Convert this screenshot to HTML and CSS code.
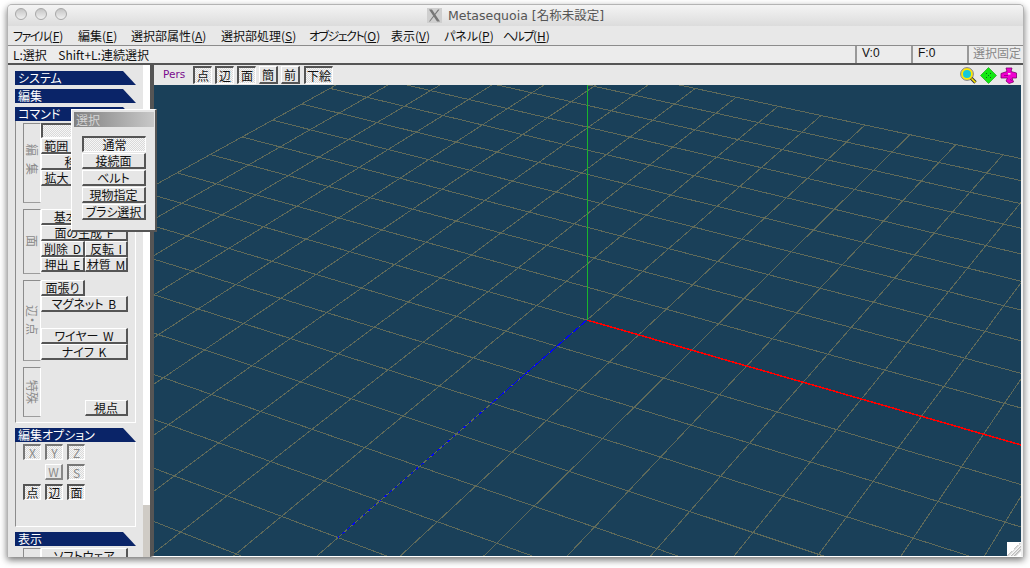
FILE: index.html
```html
<!DOCTYPE html>
<html lang="ja">
<head>
    <meta charset="UTF-8">
    <title>Metasequoia</title>
    <link rel="stylesheet" href="styles.css">
</head>
<body>
    <div class="window">
        <div class="titlebar">
            <div class="lights"><span></span><span></span><span></span></div>
            <div class="title">
                <svg class="x-icon" width="15" height="15" viewBox="0 0 15 15"><rect width="15" height="15" fill="#cfcfcf"/><path d="M2 1.5 H5 L13 13.5 H10 Z M12.5 1.5 L3 13.5 H2 L11 1.5 Z" fill="#777"/></svg>
                <span>Metasequoia [名称未設定]</span>
            </div>
        </div>
        <div class="menubar">
            <span><span class="kana">ファイル</span>(<u>F</u>)</span>
            <span>編集(<u>E</u>)</span>
            <span>選択部属性(<u>A</u>)</span>
            <span>選択部処理(<u>S</u>)</span>
            <span><span class="kana">オブジェクト</span>(<u>O</u>)</span>
            <span>表示(<u>V</u>)</span>
            <span>パネル(<u>P</u>)</span>
            <span><span class="kana">ヘルプ</span>(<u>H</u>)</span>
        </div>
        <div class="statusbar">
            <div class="hint">L:選択&nbsp; Shift+L:連続選択</div>
            <div class="cell">V:0</div>
            <div class="cell">F:0</div>
            <div class="cell cell-lock">選択固定</div>
        </div>
        <div class="workarea">
            <div class="sidebar">
                <div class="panel-title">システム</div>
                <div class="panel-title">編集</div>
                <div class="panel-title">コマンド</div>
                <div class="cmd-box">
                    <div class="group group-edit">
                        <div class="group-label label-spaced">編集</div>
                        <div class="rows">
                            <div class="btn pressed wide short">選択</div>
                            <div class="btn half">範囲 R</div><div class="btn half">投縄</div>
                            <div class="btn wide">移動 W</div>
                            <div class="btn half">拡大 T</div><div class="btn half">回転</div>
                        </div>
                    </div>
                    <div class="group group-face">
                        <div class="group-label">面</div>
                        <div class="rows">
                            <div class="btn wide">基本図形 P</div>
                            <div class="btn wide">面の生成 F</div>
                            <div class="btn half">削除 D</div><div class="btn half">反転 I</div>
                            <div class="btn half short">押出 E</div><div class="btn half short">材質 M</div>
                        </div>
                    </div>
                    <div class="group group-vertex">
                        <div class="group-label">辺・点</div>
                        <div class="rows">
                            <div class="btn half">面張り</div><div class="blank"></div>
                            <div class="btn wide">マグネット B</div>
                            <div class="blank wide"></div>
                            <div class="btn wide">ワイヤー W</div>
                            <div class="btn wide">ナイフ K</div>
                        </div>
                    </div>
                    <div class="group group-special">
                        <div class="group-label">特殊</div>
                        <div class="rows rows-end">
                            <div class="blank"></div><div class="btn half">視点</div>
                        </div>
                    </div>
                </div>
                <div class="panel-title title-options">編集オプション</div>
                <div class="options-box">
                    <div class="options">
                        <div class="opt pressed off">X</div><div class="opt pressed off">Y</div><div class="opt pressed off">Z</div>
                        <div></div><div class="opt off">W</div><div class="opt pressed off">S</div>
                        <div class="opt pressed">点</div><div class="opt pressed">辺</div><div class="opt pressed">面</div>
                    </div>
                </div>
                <div class="panel-title title-view">表示</div>
                <div class="group group-display">
                    <div class="group-label">描</div>
                    <div class="rows"><div class="btn wide">ソフトウェア</div></div>
                </div>
            </div>
            <div class="scrollbar"><div class="scroll-thumb"></div></div>
            <div class="main">
                <div class="toolbar">
                    <span class="pers">Pers</span>
                    <div class="tool pressed">点</div>
                    <div class="tool pressed">辺</div>
                    <div class="tool pressed">面</div>
                    <div class="tool">簡</div>
                    <div class="tool">前</div>
                    <div class="tool pressed tool-wide">下絵</div>
                    <div class="view-icons">
                        <svg width="17" height="17" viewBox="0 0 17 17"><path d="M10 10 L15.5 15.5" stroke="#333" stroke-width="3.4"/><path d="M10 10 L15.5 15.5" stroke="#ffe800" stroke-width="1.6"/><circle cx="7" cy="7" r="5" fill="#16c8d8" stroke="#ffe800" stroke-width="2"/><circle cx="7" cy="7" r="6.4" fill="none" stroke="#555" stroke-width=".7"/></svg>
                        <svg width="17" height="17" viewBox="0 0 17 17"><path d="M8.5 .5 L16.5 8.5 L8.5 16.5 L.5 8.5 Z" fill="#12e812" stroke="#0a9a0a" stroke-width=".6"/><path d="M6 6 L7 7 M11 6 L10 7 M6 11 L7 10 M11 11 L10 10" stroke="#0a6a0a" stroke-width="1"/><rect x="8" y="8" width="1" height="1" fill="#063"/></svg>
                        <svg width="18" height="17" viewBox="0 0 18 17"><path d="M6 1 L12 1 L11 4.5 L16.5 6 L16.5 11 L12 11 L13.5 15 L9 16.5 L6 14 L7.5 11 L1 11 L1 6.5 L7 4.5 Z" fill="#f000d0" stroke="#7a006c" stroke-width=".8" stroke-linejoin="round"/><rect x="8" y="6" width="2.5" height="1.6" fill="#e8e8e8"/><path d="M4 8.5 H8 M10 12.5 L12 13.5" stroke="#7a006c" stroke-width=".7"/></svg>
                    </div>
                </div>
                <div class="viewport">
                    <svg id="grid" class="grid" viewBox="154 85 867 471"></svg>
                    <div class="grip"></div>
                </div>
            </div>
        </div>
        <div class="popup">
            <div class="popup-title">選択</div>
            <div class="popup-list">
                <div class="btn pressed">通常</div>
                <div class="btn">接続面</div>
                <div class="btn">ベルト</div>
                <div class="btn">現物指定</div>
                <div class="btn">ブラシ選択</div>
            </div>
        </div>
    </div>
    <script src="script.js"></script>
</body>
</html>
```

FILE: styles.css
```css
html, body {
    margin: 0;
    height: 100%;
    overflow: hidden;
    background-color: #fff;
}
body {
    font-family: "Noto Sans CJK JP", sans-serif;
    font-size: 12px;
    font-feature-settings: "palt";
    color: #111;
    line-height: 14px;
}
.window {
    position: relative;
    box-sizing: border-box;
    width: 1017px;
    height: 553px;
    margin: 4px 0 0 7px;
    display: flex;
    flex-direction: column;
    background-color: #e6e6e6;
    border: 1px solid #b4b4b4;
    border-bottom: 0;
    border-radius: 5px 5px 0 0;
    box-shadow: 0 3px 7px rgba(0,0,0,0.55);
}

/* title bar */
.titlebar {
    position: relative;
    height: 21px;
    flex: none;
    display: flex;
    align-items: center;
    justify-content: center;
    border-radius: 4px 4px 0 0;
    background: linear-gradient(#f4f4f4, #dcdcdc);
}
.lights {
    position: absolute;
    left: 7px;
    top: 3px;
    display: flex;
    gap: 8px;
}
.lights span {
    box-sizing: border-box;
    width: 12px;
    height: 12px;
    border-radius: 50%;
    border: 1px solid #a8a8a8;
    background: linear-gradient(#c4c4c4, #f0f0f0);
}
.title {
    display: flex;
    align-items: center;
    gap: 6px;
    font-family: "DejaVu Sans", "Noto Sans CJK JP", sans-serif;
    font-size: 12.5px;
    color: #555;
    font-feature-settings: normal;
}

/* menu and status */
.menubar {
    height: 19px;
    flex: none;
    display: grid;
    grid-template-columns: 65px 53px 90px 88px 82px 53px 59px auto;
    align-items: center;
    padding-left: 5px;
    background-color: #e8e8e8;
    border-bottom: 1px solid #8c8c8c;
}
.kana {
    letter-spacing: -1.5px;
}
.statusbar {
    height: 17px;
    flex: none;
    display: flex;
    align-items: center;
    background-color: #ececec;
    border-bottom: 2px solid #555;
}
.hint {
    flex: 1;
    padding-left: 5px;
    word-spacing: 3px;
}
.cell {
    box-sizing: border-box;
    width: 56px;
    height: 17px;
    border-left: 2px solid #999;
    padding-left: 5px;
    font-family: "Liberation Sans", sans-serif;
}
.cell-lock {
    font-family: "Noto Sans CJK JP", sans-serif;
    color: #888;
    white-space: nowrap;
    padding-left: 4px;
}

/* left side */
.workarea {
    flex: 1;
    display: flex;
    min-height: 0;
}
.sidebar {
    box-sizing: border-box;
    width: 135px;
    flex: none;
    padding: 6px 0 0 7px;
    overflow: hidden;
    background-color: #e6e6e6;
}
.panel-title {
    box-sizing: border-box;
    width: 121px;
    height: 14px;
    margin-bottom: 4px;
    padding-left: 3px;
    line-height: 14px;
    color: #fff;
    background-color: #0a2468;
    clip-path: polygon(0 0, 108px 0, 100% 100%, 0 100%);
}
.cmd-box {
    box-sizing: border-box;
    width: 121px;
    height: 302px;
    margin-top: -4px;
    padding: 2px 0 0 7px;
    border-left: 1px solid #8c8c8c;
    border-right: 1px solid #fff;
    border-bottom: 1px solid #fff;
}
.group {
    display: flex;
}
.group-label {
    box-sizing: border-box;
    width: 18px;
    flex: none;
    display: flex;
    align-items: center;
    justify-content: center;
    writing-mode: vertical-rl;
    text-orientation: sideways;
    color: #8a8a8a;
    border: 1px solid #8c8c8c;
    border-right-color: #fff;
    border-bottom-color: #9c9c9c;
}
.label-spaced {
    letter-spacing: 7px;
}
.rows {
    display: grid;
    grid-template-columns: 44px 43px;
    grid-auto-rows: min-content;
    align-content: start;
}
.rows-end {
    align-content: end;
}
.group-edit {
    height: 80px;
    margin-bottom: 6px;
}
.group-face {
    height: 65px;
    margin-bottom: 6px;
}
.group-vertex {
    height: 81px;
    margin-bottom: 6px;
}
.group-special {
    height: 50px;
}
.group-special .rows {
    padding-bottom: 1px;
}
.btn {
    box-sizing: border-box;
    height: 16px;
    line-height: 13px;
    text-align: center;
    white-space: nowrap;
    word-spacing: 2px;
    overflow: hidden;
    background-color: #e6e6e6;
    border-top: 1px solid #fff;
    border-left: 1px solid #fff;
    border-right: 2px solid #555;
    border-bottom: 2px solid #555;
}
.btn.short {
    height: 15px;
}
.wide {
    grid-column: span 2;
}
.blank {
    height: 16px;
}
.pressed {
    border-top: 2px solid #555;
    border-left: 2px solid #555;
    border-right: 1px solid #fff;
    border-bottom: 1px solid #fff;
    background: repeating-conic-gradient(#d9d9d9 0 25%, #f6f6f6 0 50%) 0 0 / 2px 2px;
}
.title-options {
    margin-top: 5px;
    margin-bottom: 0;
}
.options-box {
    box-sizing: border-box;
    width: 121px;
    height: 85px;
    padding: 2px 0 0 7px;
    border-left: 1px solid #8c8c8c;
    border-right: 1px solid #fff;
    border-bottom: 1px solid #fff;
}
.options {
    display: grid;
    grid-template-columns: 18px 18px 18px;
    grid-auto-rows: 16px;
    column-gap: 4px;
    row-gap: 4px;
}
.opt {
    box-sizing: border-box;
    height: 16px;
    line-height: 13px;
    text-align: center;
    background-color: #e6e6e6;
    border-top: 1px solid #fff;
    border-left: 1px solid #fff;
    border-right: 2px solid #888;
    border-bottom: 2px solid #888;
}
.opt.pressed {
    border-top: 2px solid #555;
    border-left: 2px solid #555;
    border-right: 1px solid #fff;
    border-bottom: 1px solid #fff;
    background: repeating-conic-gradient(#d9d9d9 0 25%, #f6f6f6 0 50%) 0 0 / 2px 2px;
}
.off {
    color: #8a8a8a;
}
.opt.pressed.off {
    border-top-color: #777;
    border-left-color: #777;
}
.title-view {
    margin-top: 5px;
    margin-bottom: 2px;
}
.group-display {
    margin-left: 8px;
    height: 30px;
}

/* scrollbar between panel and view */
.scrollbar {
    width: 7px;
    flex: none;
    background-color: #fff;
    display: flex;
    flex-direction: column;
    justify-content: flex-end;
}
.scroll-thumb {
    height: 52px;
    background-color: #cfcbc5;
}

/* view */
.main {
    flex: 1;
    display: flex;
    flex-direction: column;
    min-width: 0;
    border-left: 4px solid #555;
    border-right: 2px solid #f0f0f0;
    border-bottom: 1px solid #fff;
}
.toolbar {
    height: 20px;
    flex: none;
    box-sizing: border-box;
    display: flex;
    align-items: flex-start;
    padding: 1px 3px 0 9px;
    background-color: #e8e8e8;
}
.pers {
    width: 30px;
    margin-top: 1px;
    color: #7a0a8c;
    font-family: "DejaVu Sans", sans-serif;
    font-size: 10.5px;
}
.tool {
    box-sizing: border-box;
    width: 19px;
    height: 18px;
    margin-right: 3px;
    line-height: 15px;
    text-align: center;
    background-color: #e6e6e6;
    border-top: 1px solid #fff;
    border-left: 1px solid #fff;
    border-right: 2px solid #555;
    border-bottom: 2px solid #555;
}
.tool.pressed {
    border-top: 2px solid #555;
    border-left: 2px solid #555;
    border-right: 1px solid #fff;
    border-bottom: 1px solid #fff;
}
.tool-wide {
    width: 29px;
    margin-left: 1px;
}
.view-icons {
    margin-left: auto;
    display: flex;
    gap: 3px;
    padding-top: 1px;
}
.viewport {
    position: relative;
    flex: 1;
    min-height: 0;
    background-color: #1a4059;
}
.grid {
    position: absolute;
    inset: 0;
    width: 100%;
    height: 100%;
    display: block;
}
.grip {
    position: absolute;
    right: 0;
    bottom: 0;
    width: 14px;
    height: 14px;
    background: linear-gradient(135deg, #fff 50%, #c8c8c8 50%, #fff 62%, #b0b0b0 62%, #fff 74%, #b0b0b0 74%, #fff 86%);
}

/* floating panel over the command box */
.popup {
    position: absolute;
    left: 63px;
    top: 104px;
    box-sizing: border-box;
    width: 86px;
    height: 123px;
    padding: 2px 1px 0 2px;
    background-color: #e6e6e6;
    border-top: 1px solid #fff;
    border-left: 1px solid #fff;
    border-right: 2px solid #555;
    border-bottom: 2px solid #555;
}
.popup-title {
    height: 15px;
    padding-left: 2px;
    line-height: 15px;
    color: #d4d4d4;
    background: linear-gradient(90deg, #808080, #c8c8c8);
}
.popup-list {
    display: flex;
    flex-direction: column;
    gap: 1px;
    width: 64px;
    margin: 9px 0 0 8px;
}
```

FILE: script.js
```js
// perspective floor grid, coordinates are page pixels
var ox = 587, oy = 320;
var p = -0.0145, q = -0.0252;
var ax = 50.9, ay = 14.66, bx = -29.3, by = 25.6;
var iMin = -10, jMin = -10, iMax = 22, jMax = 16;

function project(i, j) {
    var d = 1 + p * i + q * j;
    return [ox + (ax * i + bx * j) / d, oy + (ay * i + by * j) / d];
}

function line(svg, a, b, color, width, dash) {
    var l = document.createElementNS("http://www.w3.org/2000/svg", "line");
    l.setAttribute("x1", a[0]);
    l.setAttribute("y1", a[1]);
    l.setAttribute("x2", b[0]);
    l.setAttribute("y2", b[1]);
    l.setAttribute("stroke", color);
    l.setAttribute("stroke-width", width);
    l.setAttribute("shape-rendering", "crispEdges");
    if (dash) l.setAttribute("stroke-dasharray", dash);
    svg.appendChild(l);
}

var svg = document.getElementById("grid");
var gridColor = "#5f6a5a";
for (var j = jMin; j <= jMax; j++) {
    if (j != 0) line(svg, project(iMin, j), project(iMax, j), gridColor, 1);
}
for (var i = iMin; i <= iMax; i++) {
    line(svg, project(i, jMin), project(i, jMax), gridColor, 1);
}
line(svg, project(iMin, 0), project(0, 0), gridColor, 1);
line(svg, project(0, 0), project(iMax, 0), "#ff0000", 1.5);
// blue axis breaks up as it comes towards the viewer
line(svg, project(0, 0), project(0, 3), "#0000ff", 1, "9 1");
line(svg, project(0, 3), project(0, 7), "#0000ff", 1, "3 4");
line(svg, [587.5, 85], [587.5, 320], "#19b52c", 1);
```
